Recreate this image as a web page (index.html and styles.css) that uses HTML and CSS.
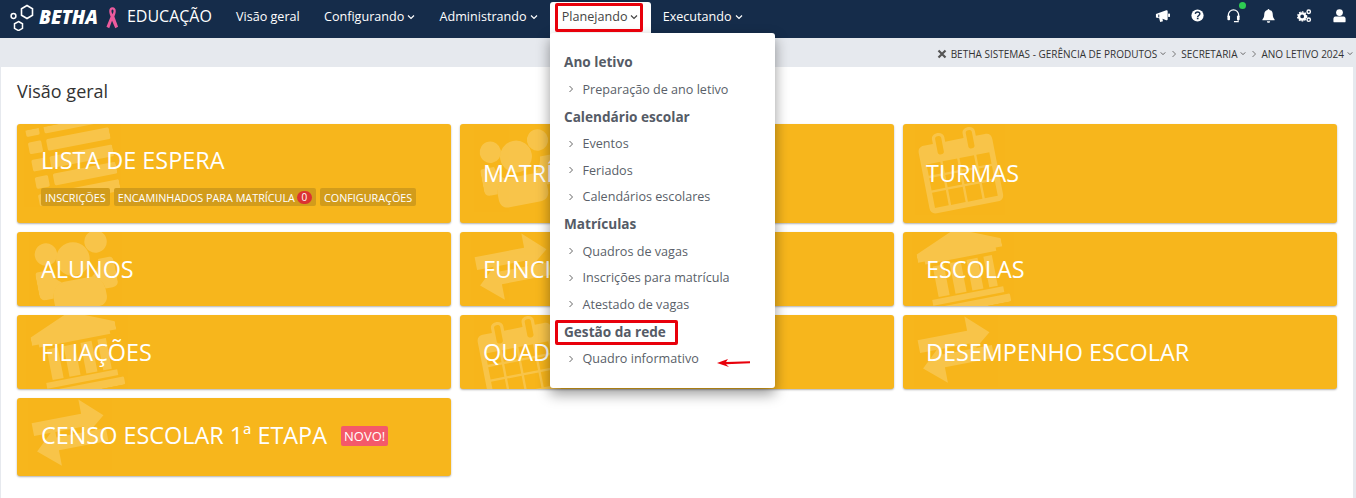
FILE: index.html
```html
<!DOCTYPE html>
<html lang="pt-BR">
<head>
  <meta charset="UTF-8">
  <title>Betha Educação</title>
  <link rel="stylesheet" href="styles.css">
</head>
<body>

  <svg class="defs" width="0" height="0">
    <symbol id="i-chev" viewBox="0 0 8 6"><path d="M1 1.500 4 4.500 7 1.500" fill="none" stroke="currentColor" stroke-width="1.200"/></symbol>
    <symbol id="i-right" viewBox="0 0 6 8"><path d="M1.500 1 4.500 4 1.500 7" fill="none" stroke="currentColor" stroke-width="1"/></symbol>
    <symbol id="i-list" viewBox="0 0 100 100">
      <rect x="2" y="-6" width="16" height="14" rx="2"/><rect x="24" y="-6" width="76" height="14" rx="2"/>
      <rect x="2" y="15" width="16" height="14" rx="2"/><rect x="24" y="15" width="76" height="14" rx="2"/>
      <rect x="2" y="36" width="16" height="14" rx="2"/><rect x="24" y="36" width="76" height="14" rx="2"/>
      <rect x="2" y="57" width="16" height="14" rx="2"/><rect x="24" y="57" width="76" height="14" rx="2"/>
      <rect x="2" y="78" width="16" height="14" rx="2"/><rect x="24" y="78" width="76" height="14" rx="2"/>
    </symbol>
    <symbol id="i-users" viewBox="0 0 100 100">
      <circle cx="18" cy="24" r="14"/><circle cx="82" cy="20" r="14"/><circle cx="50" cy="36" r="21"/>
      <path d="M3 44h16c2 10 8 16 12 18-8 3-13 9-14 18H8c-5 0-8-3-8-8V50c0-3 1-6 3-6zM81 42h14c3 0 5 3 5 8v22c0 5-3 8-8 8h-9c-1-9-6-15-14-18 6-3 11-10 12-20z"/>
      <path d="M34 62h32c10 0 17 8 17 20v6c0 7-5 12-12 12H29c-7 0-12-5-12-12v-6c0-12 7-20 17-20z"/>
    </symbol>
    <symbol id="i-cal" viewBox="0 0 100 100">
      <path fill-rule="evenodd" d="M10 12h12V6c0-9 16-9 16 0v6h24V6c0-9 16-9 16 0v6h12c5 0 8 3 8 8v72c0 5-3 8-8 8H10c-5 0-8-3-8-8V20c0-5 3-8 8-8zM26 6v18c0 4 8 4 8 0V6c0-4-8-4-8 0zM66 6v18c0 4 8 4 8 0V6c0-4-8-4-8 0zM9 36v15h18V36zM30 36v15h19V36zM52 36v15h19V36zM74 36v15h17V36zM9 54v16h18V54zM30 54v16h19V54zM52 54v16h19V54zM74 54v16h17V54zM9 73v20h18V73zM30 73v20h19V73zM52 73v20h19V73zM74 73v20h17V73z"/>
    </symbol>
    <symbol id="i-swap" viewBox="0 0 100 100">
      <polygon points="0,28 70,28 70,8 100,36 70,60 70,46 0,46"/>
      <polygon points="100,54 30,54 30,40 0,68 30,94 30,72 100,72"/>
    </symbol>
    <symbol id="i-bank" viewBox="0 0 100 100" preserveAspectRatio="none">
      <polygon points="50,0 100,22 100,32 92,32 92,36 8,36 8,32 0,32 0,22"/>
      <rect x="16" y="40" width="13" height="38"/><rect x="36" y="40" width="13" height="38"/><rect x="56" y="40" width="13" height="38"/><rect x="76" y="40" width="10" height="38"/>
      <rect x="8" y="80" width="84" height="7"/><rect x="2" y="90" width="96" height="10" rx="2"/>
    </symbol>
  </svg>

  <header class="topbar">
    <div class="brand">
      <svg class="brand-mark" width="24" height="28" viewBox="0 0 24 28">
        <path d="M17 2.500 22.500 5.700v6.600l-5.500 3.200-5.500-3.200V5.700z" fill="none" stroke="#fff" stroke-width="1.600"/>
        <circle cx="3.500" cy="13" r="2.400" fill="none" stroke="#fff" stroke-width="1.500"/>
        <path d="M8.500 18.500l4 2.300v4.500l-4 2.300-4-2.300v-4.500z" fill="none" stroke="#fff" stroke-width="1.500"/>
      </svg>
      <span class="brand-name">BETHA</span>
      <svg class="ribbon" width="13" height="25" viewBox="0 0 14 25">
        <path d="M7 1.500c2.500 0 3.500 2 3.500 4 0 3-1.500 6-1.500 6l4 11-3 1.500-3.500-8-3 8-3-1.500 4.500-11S3.500 8.500 3.500 5.500c0-2 1-4 3.500-4zM7 4C6 4 5.800 5 6 6.500L7 9l1-2.500C8.200 5 8 4 7 4z" fill="#ec5b9d" fill-rule="evenodd"/>
      </svg>
      <span class="brand-product">EDUCAÇÃO</span>
    </div>

    <nav class="menu">
      <a class="menu-item">Visão geral</a>
      <a class="menu-item">Configurando <svg class="chev"><use href="#i-chev"/></svg></a>
      <a class="menu-item">Administrando <svg class="chev"><use href="#i-chev"/></svg></a>
      <a class="menu-item active">Planejando <svg class="chev"><use href="#i-chev"/></svg></a>
      <a class="menu-item">Executando <svg class="chev"><use href="#i-chev"/></svg></a>
    </nav>

    <div class="tools">
      <svg class="tool" viewBox="0 0 16 16"><path d="M1 6.500 12 2.500c1-.4 1.500 0 1.500 1v8.500c0 1-.5 1.400-1.500 1L8 11.500l.5 2.500-3 .8-1-4-3.500-.8z" fill="#fff"/><path d="M4 7v3" stroke="#152c4a" stroke-width="1"/><rect x="14" y="6" width="2" height="3.500" fill="#fff"/></svg>
      <svg class="tool" viewBox="0 0 16 16"><circle cx="8" cy="8" r="6.500" fill="#fff"/><path d="M5.700 6.300C5.800 4.800 6.800 4.200 8.100 4.200c1.400 0 2.400.8 2.400 2 0 1.800-2.300 1.700-2.300 3.300" fill="none" stroke="#152c4a" stroke-width="1.500"/><rect x="7.300" y="10.300" width="1.800" height="1.700" fill="#152c4a"/></svg>
      <span class="tool-wrap">
        <svg class="tool" viewBox="0 0 16 16"><path d="M2.500 9.500V7.500a5.500 5.500 0 0 1 11 0V9.500" fill="none" stroke="#fff" stroke-width="1.400"/><rect x="1.500" y="8" width="2.800" height="5" rx="1" fill="#fff"/><rect x="11.700" y="8" width="2.800" height="5" rx="1" fill="#fff"/><path d="M13 13v1.500H8.500" fill="none" stroke="#fff" stroke-width="1.200"/></svg>
        <span class="online-dot"></span>
      </span>
      <svg class="tool" viewBox="0 0 16 16"><path d="M8 1c.7 0 1 .4 1 1 2.300.5 3.500 2.200 3.500 4.500 0 3.500 1 4.500 2 5.800v.7H1.500v-.7c1-1.300 2-2.300 2-5.800C3.500 4.200 4.700 2.500 7 2c0-.6.300-1 1-1z" fill="#fff"/><path d="M6.300 14h3.400c0 1-.7 1.700-1.700 1.700S6.300 15 6.300 14z" fill="#fff"/></svg>
      <svg class="tool" viewBox="0 0 16 16"><circle cx="5.500" cy="9" r="3.300" fill="none" stroke="#fff" stroke-width="2.600"/><circle cx="5.500" cy="9" r="4.800" fill="none" stroke="#fff" stroke-width="1.400" stroke-dasharray="1.800 1.300"/><circle cx="12.500" cy="4" r="1.800" fill="none" stroke="#fff" stroke-width="1.500"/><circle cx="12.500" cy="12.500" r="1.800" fill="none" stroke="#fff" stroke-width="1.500"/></svg>
      <svg class="tool" viewBox="0 0 16 16"><circle cx="8" cy="4.800" r="3.600" fill="#fff"/><path d="M3.500 9h9c1.200 0 2 1 2 2.500V14c0 .8-.6 1.300-1.300 1.300H2.800c-.7 0-1.300-.5-1.300-1.300v-2.500C1.500 10 2.300 9 3.500 9z" fill="#fff"/></svg>
    </div>
  </header>

  <div class="crumbs">
    <svg class="crumb-x" viewBox="0 0 10 10"><path d="M1.500 1.500 8.500 8.500M8.500 1.500 1.500 8.500" stroke="#555" stroke-width="2.200"/></svg>
    <span>Betha Sistemas - Gerência de Produtos</span><svg class="crumb-chev"><use href="#i-chev"/></svg>
    <svg class="crumb-sep"><use href="#i-right"/></svg>
    <span>Secretaria</span><svg class="crumb-chev"><use href="#i-chev"/></svg>
    <svg class="crumb-sep"><use href="#i-right"/></svg>
    <span>Ano letivo 2024</span><svg class="crumb-chev"><use href="#i-chev"/></svg>
  </div>

  <main class="page">
    <h1 class="page-title">Visão geral</h1>

    <div class="cards">
      <div class="card card-tall">
        <svg class="card-icon icon-list"><use href="#i-list"/></svg>
        <div class="card-title">Lista de espera</div>
        <div class="chips">
          <span class="chip">Inscrições</span>
          <span class="chip">Encaminhados para matrícula<span class="count">0</span></span>
          <span class="chip">Configurações</span>
        </div>
      </div>
      <div class="card">
        <svg class="card-icon icon-users-top"><use href="#i-users"/></svg>
        <div class="card-title">Matrículas</div>
      </div>
      <div class="card">
        <svg class="card-icon icon-cal"><use href="#i-cal"/></svg>
        <div class="card-title">Turmas</div>
      </div>

      <div class="card">
        <svg class="card-icon icon-users"><use href="#i-users"/></svg>
        <div class="card-title">Alunos</div>
      </div>
      <div class="card">
        <svg class="card-icon icon-swap"><use href="#i-swap"/></svg>
        <div class="card-title">Funcionários</div>
      </div>
      <div class="card">
        <svg class="card-icon icon-bank"><use href="#i-bank"/></svg>
        <div class="card-title">Escolas</div>
      </div>

      <div class="card">
        <svg class="card-icon icon-bank"><use href="#i-bank"/></svg>
        <div class="card-title">Filiações</div>
      </div>
      <div class="card">
        <svg class="card-icon icon-cal-low"><use href="#i-cal"/></svg>
        <div class="card-title">Quadro de horários</div>
      </div>
      <div class="card">
        <svg class="card-icon icon-swap"><use href="#i-swap"/></svg>
        <div class="card-title">Desempenho escolar</div>
      </div>

      <div class="card card-census">
        <svg class="card-icon icon-swap"><use href="#i-swap"/></svg>
        <div class="card-title">Censo escolar 1ª etapa <span class="tag-new">Novo!</span></div>
      </div>
    </div>
  </main>

  <!-- dropdown do Planejando -->
  <div class="dropdown">
    <div class="group-title">Ano letivo</div>
    <a class="group-item"><svg class="item-arrow"><use href="#i-right"/></svg>Preparação de ano letivo</a>
    <div class="group-title">Calendário escolar</div>
    <a class="group-item"><svg class="item-arrow"><use href="#i-right"/></svg>Eventos</a>
    <a class="group-item"><svg class="item-arrow"><use href="#i-right"/></svg>Feriados</a>
    <a class="group-item"><svg class="item-arrow"><use href="#i-right"/></svg>Calendários escolares</a>
    <div class="group-title">Matrículas</div>
    <a class="group-item"><svg class="item-arrow"><use href="#i-right"/></svg>Quadros de vagas</a>
    <a class="group-item"><svg class="item-arrow"><use href="#i-right"/></svg>Inscrições para matrícula</a>
    <a class="group-item"><svg class="item-arrow"><use href="#i-right"/></svg>Atestado de vagas</a>
    <div class="group-title">Gestão da rede</div>
    <a class="group-item"><svg class="item-arrow"><use href="#i-right"/></svg>Quadro informativo</a>
  </div>

  <!-- marcacoes vermelhas do print -->
  <div class="mark mark-tab"></div>
  <div class="mark mark-group"></div>
  <svg class="mark-arrow" viewBox="0 0 34 10"><path d="M0 5 11 1 9 4 33 3.300V5.300L9 6.200 12 9z" fill="#e8000b"/></svg>

</body>
</html>
```

FILE: styles.css
```css
* {
  box-sizing: border-box;
}

html, body {
  height: 100%;
}

body {
  margin: 0;
  overflow: hidden;
  background: #e6e9ee;
  font-family: 'Open Sans', sans-serif;
  color: #333;
}

.defs {
  position: absolute;
}

/* top bar */
.topbar {
  display: flex;
  align-items: stretch;
  height: 38px;
  padding-left: 10px;
  background: #152c4a;
  color: #fff;
}

.brand {
  display: flex;
  align-items: center;
  width: 213.900px;
}

.brand-mark {
  margin-top: -5px;
  flex: none;
}

.brand-name {
  margin-left: 5px;
  margin-top: -4px;
  font-size: 18.800px;
  font-weight: 800;
  font-style: italic;
}

.ribbon {
  margin: -4px 0 0 8px;
  flex: none;
}

.brand-product {
  margin-left: 8px;
  margin-top: -7px;
  font-size: 16px;
}

.menu {
  display: flex;
  align-items: stretch;
}

.menu-item {
  display: flex;
  align-items: center;
  gap: 3px;
  height: 36px;
  margin-top: 2px;
  padding: 0 12.100px 8px;
  font-size: 12.600px;
  white-space: nowrap;
}

.menu-item.active {
  background: #fff;
  color: #444;
  border-radius: 3px 3px 0 0;
}

.chev {
  width: 8px;
  height: 6px;
  margin-top: 1px;
}

.tools {
  display: flex;
  align-items: center;
  gap: 20.500px;
  margin-left: auto;
  padding: 0 9px 8px 0;
}

.tool {
  display: block;
  width: 15px;
  height: 15px;
}

.tool-wrap {
  position: relative;
}

.online-dot {
  position: absolute;
  top: -6px;
  right: -5px;
  width: 7px;
  height: 7px;
  border-radius: 50%;
  background: #2ecc52;
}

/* breadcrumb */
.crumbs {
  display: flex;
  align-items: center;
  justify-content: flex-end;
  height: 29px;
  padding: 2px 3px 0 0;
  font-size: 10px;
  text-transform: uppercase;
  color: #333;
}

.crumb-x {
  width: 10px;
  height: 10px;
  margin-right: 4px;
}

.crumb-chev {
  width: 6px;
  height: 5px;
  margin-left: 3px;
  color: #555;
}

.crumb-sep {
  width: 6px;
  height: 8px;
  margin: 0 4.500px;
  color: #777;
}

/* content */
.page {
  height: 431px;
  margin: 0 3px 0 1px;
  padding: 12px 16px 0;
  background: #fff;
}

.page-title {
  margin: 0 0 20px;
  font-size: 18px;
  font-weight: 400;
  line-height: 25px;
  color: #333;
}

.cards {
  display: grid;
  grid-template-columns: repeat(3, 434px);
  grid-template-rows: 99px 74px 74px 78px;
  gap: 9px;
}

.card {
  position: relative;
  display: flex;
  flex-direction: column;
  justify-content: center;
  padding: 0 24px;
  overflow: hidden;
  background: #f7b61c;
  border-radius: 3px;
  box-shadow: 0 1px 2px rgba(0, 0, 0, .3);
}

.card:nth-child(3n+2), .card:nth-child(3n+3) {
  padding-left: 23px;
}

.card-title {
  position: relative;
  margin-top: -1px;
  font-size: 23.400px;
  line-height: 32px;
  text-transform: uppercase;
  color: #fff;
  white-space: nowrap;
}

.card-tall {
  justify-content: flex-start;
  padding-top: 21px;
}

.card-census {
  padding-bottom: 3px;
}

.card-icon {
  position: absolute;
  fill: #fff;
  opacity: .2;
  transform: rotate(-11deg);
}

.icon-list {
  left: 14px;
  top: -2px;
  width: 84px;
  height: 84px;
}

.icon-users-top {
  left: 20px;
  top: 3px;
  width: 76px;
  height: 80px;
}

.icon-users {
  left: 18px;
  top: -3px;
  width: 80px;
  height: 82px;
}

.icon-cal {
  left: 18px;
  top: 4px;
  width: 78px;
  height: 82px;
}

.icon-cal-low {
  left: 20px;
  top: 2px;
  width: 78px;
  height: 82px;
}

.icon-swap {
  left: 15px;
  top: -2px;
  width: 76px;
  height: 72px;
}

.icon-bank {
  left: 17px;
  top: -4px;
  width: 86px;
  height: 82px;
}

.chips {
  position: relative;
  display: flex;
  gap: 4px;
  margin-top: 12px;
}

.chip {
  display: flex;
  align-items: center;
  height: 18px;
  padding: 0 4px;
  font-size: 10.800px;
  text-transform: uppercase;
  color: #fff;
  background: #d29c1b;
  border-radius: 2px;
}

.count {
  width: 15px;
  height: 13px;
  margin-left: 2px;
  text-align: center;
  line-height: 13px;
  font-size: 10px;
  background: #dc3232;
  border-radius: 7px;
}

.tag-new {
  display: inline-block;
  position: relative;
  top: -3px;
  margin-left: 8px;
  padding: 0 3px;
  font-size: 13px;
  line-height: 20px;
  background: #f4596a;
  border-radius: 2px;
}

/* dropdown */
.dropdown {
  position: absolute;
  left: 550px;
  top: 33px;
  width: 225px;
  height: 355px;
  padding-top: 15px;
  background: #fff;
  border-radius: 3px;
  box-shadow: 0 6px 14px rgba(0, 0, 0, .4);
}

.group-title {
  height: 28px;
  padding-left: 14px;
  font-size: 13.600px;
  font-weight: 700;
  line-height: 28px;
  color: #555b66;
}

.group-item {
  display: flex;
  align-items: center;
  height: 26.500px;
  padding-left: 18px;
  font-size: 12.600px;
  color: #5a5f69;
}

.item-arrow {
  width: 6px;
  height: 8px;
  margin-right: 8.500px;
  color: #666;
}

/* red marks */
.mark {
  position: absolute;
  border: 3px solid #e8000b;
  border-radius: 2px;
}

.mark-tab {
  left: 555px;
  top: 3px;
  width: 88px;
  height: 29px;
}

.mark-group {
  left: 555px;
  top: 320px;
  width: 123px;
  height: 25px;
}

.mark-arrow {
  position: absolute;
  left: 717px;
  top: 358px;
  width: 34px;
  height: 10px;
}
```
